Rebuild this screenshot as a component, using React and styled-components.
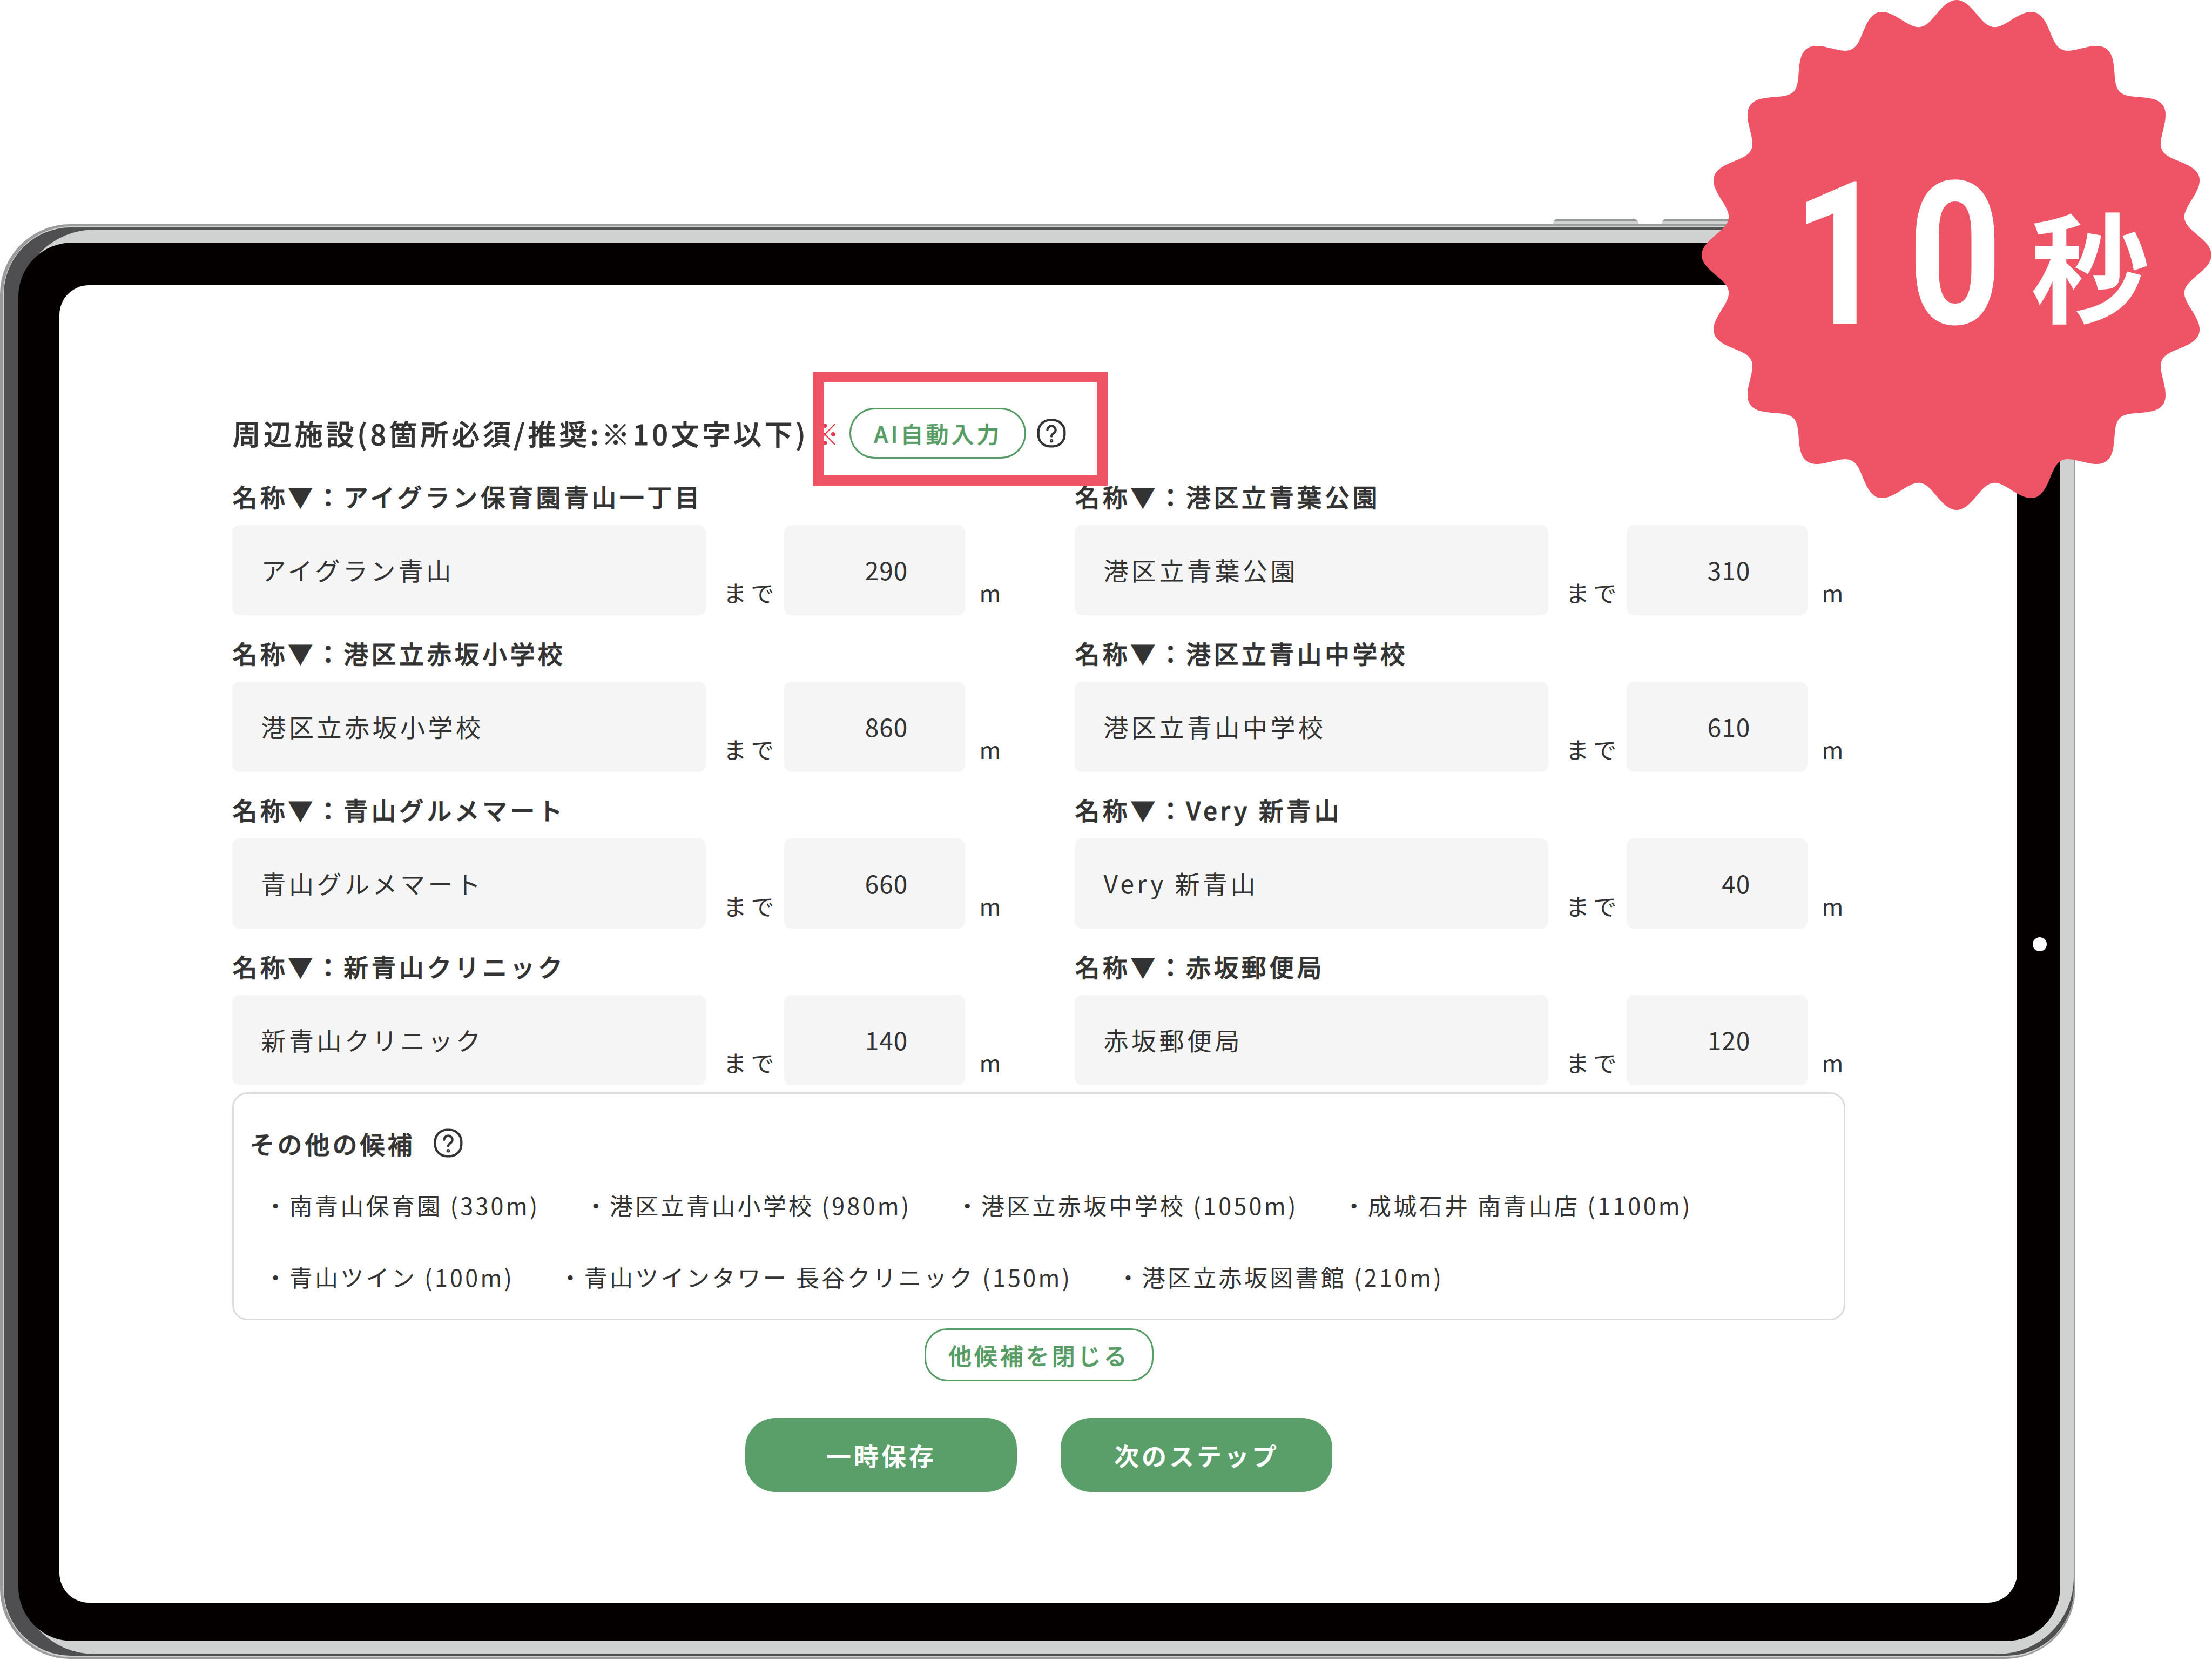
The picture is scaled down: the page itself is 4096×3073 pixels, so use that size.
import styled, { createGlobalStyle } from "styled-components";

const GlobalStyle = createGlobalStyle`
  html, body {
    margin: 0;
    padding: 0;
    background: #fff;
  }
  * {
    box-sizing: border-box;
  }
`;

const Page = styled.div`
  position: relative;
  width: 4096px;
  height: 3073px;
  padding-top: 405px;
  overflow: hidden;
  background: #fff;
  color: #333;
  font-family: "Noto Sans CJK JP", "Noto Sans", sans-serif;
`;

const TopButtons = styled.div`
  display: flex;
  gap: 43px;
  height: 10px;
  padding-left: 2876px;
`;

const TopButton = styled.div`
  width: 158px;
  border-radius: 9px 9px 0 0;
  background: linear-gradient(#989a9a 0 5px, #d0d2d1 5px);
`;

const Shell = styled.div`
  display: flex;
  width: 3842.5px;
  height: 2656px;
  padding: 3.6px 2.9px 2.9px 5.8px;
  border-radius: 130px;
  background: #9a9b9b;
`;

const Rim = styled.div`
  display: flex;
  flex: 1;
  padding: 2.9px 0 3.6px 1.4px;
  border-radius: 126px;
  background: #d0d2d1;
`;

const EdgeShadow = styled.div`
  display: flex;
  flex: 1;
  padding: 3.6px 0 2.2px 26.7px;
  border-radius: 124px;
  background: #4f4f51;
`;

const Body = styled.div`
  display: flex;
  flex: 1;
  padding: 23.8px 24.5px 24.5px 0;
  border-radius: 141px;
  background: #d0d2d1;
`;

const Bezel = styled.div`
  position: relative;
  display: flex;
  flex: 1;
  padding: 78.7px 80px 70.8px 76.5px;
  border-radius: 100px;
  background: #040000;
`;

const Camera = styled.span`
  position: absolute;
  top: 50%;
  right: 25px;
  width: 26px;
  height: 26px;
  margin-top: -8px;
  border-radius: 50%;
  background: #fff;
`;

const Screen = styled.div`
  flex: 1;
  padding: 227px 318px 0 320px;
  border-radius: 55px;
  background: #fff;
`;

const HeadingRow = styled.div`
  display: flex;
  align-items: center;
  height: 94px;
`;

const Heading = styled.h2`
  width: 1070px;
  margin: 0;
  font-size: 52px;
  line-height: 60px;
  font-weight: 500;
  letter-spacing: 5.7px;
  white-space: nowrap;
  -webkit-text-stroke: 0.8px #333;
`;

const Required = styled.span`
  width: 73px;
  font-size: 54px;
  line-height: 60px;
  color: #e8384f;
`;

const OutlineButton = styled.button`
  flex: none;
  width: ${(p) => p.$width}px;
  height: ${(p) => p.$height}px;
  padding: 0;
  border: 3px solid #569c65;
  border-radius: ${(p) => p.$radius}px;
  background: #fff;
  color: #569c65;
  font-family: inherit;
  font-size: ${(p) => p.$size}px;
  font-weight: 500;
  letter-spacing: ${(p) => p.$spacing}px;
  -webkit-text-stroke: 0.6px #569c65;
`;

const HelpSvg = styled.svg`
  flex: none;
  width: 54px;
  height: 54px;
  margin-left: ${(p) => p.$offset}px;
  fill: none;
  stroke: #333;
  stroke-width: 1.9;
  stroke-linecap: round;
`;

const HelpIcon = ({ $offset }) => (
  <HelpSvg $offset={$offset} viewBox="0 0 24 24">
    <rect x="1.2" y="1.2" width="21.6" height="21.6" rx="9.6" />
    <path d="M8.6 9.3a3.4 3.4 0 0 1 6.8 0.2c0 2.5-3.4 2.8-3.4 5" />
    <circle cx="12" cy="18.3" r="0.5" />
  </HelpSvg>
);

const FieldGrid = styled.div`
  display: grid;
  grid-template-columns: 1560px 1fr;
`;

const Label = styled.div`
  height: 123px;
  padding-top: 39px;
  font-size: 46px;
  line-height: 60px;
  font-weight: 500;
  letter-spacing: 5.4px;
  white-space: nowrap;
  -webkit-text-stroke: 0.8px #333;
`;

const FieldRow = styled.div`
  display: flex;
  height: 167px;
`;

const TextBox = styled.div`
  display: flex;
  align-items: center;
  width: ${(p) => p.$width}px;
  padding: ${(p) => (p.$number ? "0 106px 3px 0" : "0 0 3px 53px")};
  justify-content: ${(p) => (p.$number ? "flex-end" : "flex-start")};
  border-radius: 14px;
  background: #f5f5f5;
  font-size: 46px;
  letter-spacing: ${(p) => (p.$number ? 1 : 5.5)}px;
  white-space: nowrap;
`;

const Unit = styled.span`
  align-self: flex-end;
  width: ${(p) => p.$width}px;
  padding-left: ${(p) => p.$inset}px;
  padding-bottom: 13px;
  font-size: 43px;
  line-height: 60px;
  letter-spacing: 8px;
`;

const OtherBox = styled.section`
  width: 2987px;
  height: 422px;
  margin-top: 13px;
  padding: 61px 0 0 29px;
  border: 3px solid #dcdcdc;
  border-radius: 28px;
`;

const OtherTitle = styled.div`
  display: flex;
  align-items: center;
  height: 60px;
  margin-bottom: 18px;
  font-size: 46px;
  font-weight: 500;
  letter-spacing: 5px;
  -webkit-text-stroke: 0.8px #333;
`;

const OtherRow = styled.ul`
  display: flex;
  gap: 82px;
  height: 133px;
  margin: 0;
  padding: 0 0 0 26px;
  list-style: none;
  align-items: center;
  font-size: 43px;
  letter-spacing: 4.3px;
  white-space: nowrap;
`;

const CloseRow = styled.div`
  display: flex;
  justify-content: center;
  margin-top: 15px;
`;

const Actions = styled.div`
  display: flex;
  justify-content: center;
  gap: 81px;
  margin-top: 68px;
`;

const ActionButton = styled.button`
  width: 503px;
  height: 137px;
  padding: 0;
  border: 0;
  border-radius: 56px;
  background: #5a9e69;
  color: #fff;
  font-family: inherit;
  font-size: 46px;
  font-weight: 700;
  letter-spacing: 5px;
`;

const Highlight = styled.div`
  position: absolute;
  left: 1505px;
  top: 688px;
  width: 546px;
  height: 212px;
  border: 20px solid #ee5366;
`;

const Badge = styled.div`
  position: absolute;
  left: 3151px;
  top: 0;
  width: 944px;
  height: 944px;
`;

const BadgeShape = styled.svg`
  display: block;
  width: 100%;
  height: 100%;
`;

const BadgeText = styled.div`
  position: absolute;
  left: 168px;
  top: 288px;
  display: flex;
  align-items: center;
  color: #fff;
  white-space: nowrap;
`;

const BadgeNumber = styled.span`
  display: inline-block;
  width: 392px;
  font-family: Roboto, "Noto Sans", sans-serif;
  font-size: 370px;
  line-height: 370px;
  font-weight: 700;
  letter-spacing: 49px;
  transform: scaleX(0.82);
  transform-origin: left center;
`;

const BadgeUnit = styled.span`
  margin-left: 49px;
  margin-top: 24px;
  font-size: 220px;
  line-height: 220px;
  font-weight: 700;
`;

const LABEL_PREFIX = "名称▼\uFF1A";

const fields = [
  ["アイグラン保育園青山一丁目", "アイグラン青山", "290"],
  ["港区立青葉公園", "港区立青葉公園", "310"],
  ["港区立赤坂小学校", "港区立赤坂小学校", "860"],
  ["港区立青山中学校", "港区立青山中学校", "610"],
  ["青山グルメマート", "青山グルメマート", "660"],
  ["Very 新青山", "Very 新青山", "40"],
  ["新青山クリニック", "新青山クリニック", "140"],
  ["赤坂郵便局", "赤坂郵便局", "120"],
];

const otherRows = [
  ["南青山保育園 (330m)", "港区立青山小学校 (980m)", "港区立赤坂中学校 (1050m)", "成城石井 南青山店 (1100m)"],
  ["青山ツイン (100m)", "青山ツインタワー 長谷クリニック (150m)", "港区立赤坂図書館 (210m)"],
];

// 20 soft points around the circle, in a 1308 box
const badgePath = () => {
  const points = [];
  for (let i = 0; i < 720; i++) {
    const a = (i / 720) * Math.PI * 2;
    const r = 623 + 31 * Math.cos(20 * a);
    points.push(`${(654 + r * Math.sin(a)).toFixed(1)} ${(654 - r * Math.cos(a)).toFixed(1)}`);
  }
  return `M${points.join("L")}Z`;
};

const App = () => {
  return (
    <Page>
      <GlobalStyle />
      <TopButtons>
        <TopButton />
        <TopButton />
      </TopButtons>
      <Shell>
        <Rim>
          <EdgeShadow>
            <Body>
              <Bezel>
                <Camera />
                <Screen>
                  <HeadingRow>
                    <Heading>周辺施設(8箇所必須/推奨:※10文字以下)</Heading>
                    <Required>※</Required>
                    <OutlineButton $width={327} $height={94} $radius={47} $size={42} $spacing={5}>
                      AI自動入力
                    </OutlineButton>
                    <HelpIcon $offset={20} />
                  </HeadingRow>
                  <FieldGrid>
                    {fields.map(([label, value, distance]) => (
                      <div key={label}>
                        <Label>{LABEL_PREFIX}{label}</Label>
                        <FieldRow>
                          <TextBox $width={877}>{value}</TextBox>
                          <Unit $width={145} $inset={32}>まで</Unit>
                          <TextBox $width={335} $number>{distance}</TextBox>
                          <Unit $width={70} $inset={26}>m</Unit>
                        </FieldRow>
                      </div>
                    ))}
                  </FieldGrid>
                  <OtherBox>
                    <OtherTitle>
                      その他の候補
                      <HelpIcon $offset={35} />
                    </OtherTitle>
                    {otherRows.map((row) => (
                      <OtherRow key={row[0]}>
                        {row.map((item) => (
                          <li key={item}>・{item}</li>
                        ))}
                      </OtherRow>
                    ))}
                  </OtherBox>
                  <CloseRow>
                    <OutlineButton $width={424} $height={98} $radius={42} $size={43} $spacing={5}>
                      他候補を閉じる
                    </OutlineButton>
                  </CloseRow>
                  <Actions>
                    <ActionButton>一時保存</ActionButton>
                    <ActionButton>次のステップ</ActionButton>
                  </Actions>
                </Screen>
              </Bezel>
            </Body>
          </EdgeShadow>
        </Rim>
      </Shell>
      <Highlight />
      <Badge>
        <BadgeShape viewBox="0 0 1308 1308">
          <path d={badgePath()} fill="#ee5366" />
        </BadgeShape>
        <BadgeText>
          <BadgeNumber>10</BadgeNumber>
          <BadgeUnit>秒</BadgeUnit>
        </BadgeText>
      </Badge>
    </Page>
  );
};

export default App;
